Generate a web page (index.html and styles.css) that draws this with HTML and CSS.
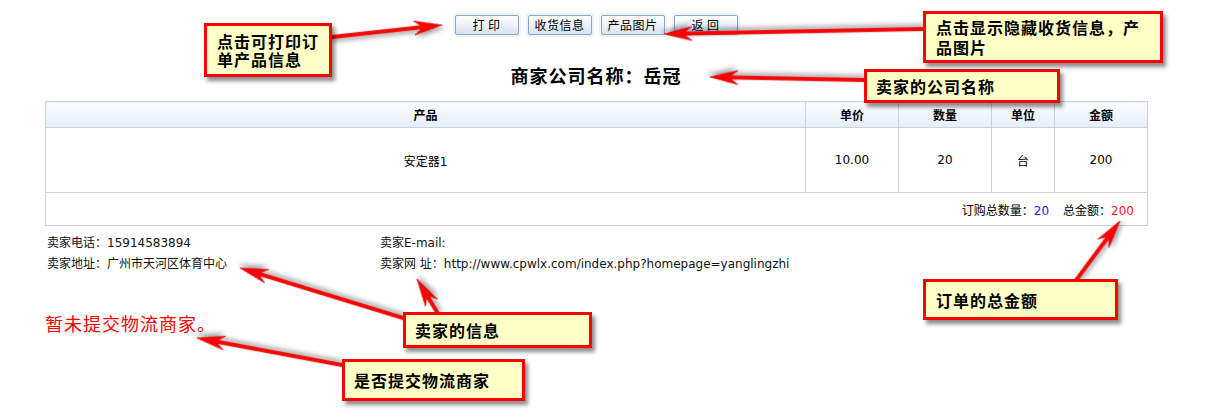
FILE: index.html
```html
<!DOCTYPE html>
<html lang="zh-CN">
<head>
<meta charset="utf-8">
<title>订单打印</title>
<link rel="stylesheet" href="styles.css">
</head>
<body>
<div class="page">
  <div class="toolbar">
    <button class="btn">打 印</button>
    <button class="btn">收货信息</button>
    <button class="btn">产品图片</button>
    <button class="btn">返 回</button>
  </div>
  <h1 class="title">商家公司名称：岳冠</h1>
  <table class="order">
    <colgroup>
      <col class="c-prod"><col class="c-price"><col class="c-qty"><col class="c-unit"><col class="c-amt">
    </colgroup>
    <thead>
      <tr><th>产品</th><th>单价</th><th>数量</th><th>单位</th><th>金额</th></tr>
    </thead>
    <tbody>
      <tr><td>安定器1</td><td>10.00</td><td>20</td><td>台</td><td>200</td></tr>
    </tbody>
    <tfoot>
      <tr><td colspan="5" class="total">订购总数量：<span class="num-blue">20</span><span class="sep"></span>总金额：<span class="num-red">200</span></td></tr>
    </tfoot>
  </table>
  <div class="seller">
    <div class="seller-item">卖家电话：15914583894</div>
    <div class="seller-item">卖家E-mail:</div>
    <div class="seller-item">卖家地址：广州市天河区体育中心</div>
    <div class="seller-item">卖家网 址：http://www.cpwlx.com/index.php?homepage=yanglingzhi</div>
  </div>
  <p class="logistics">暂未提交物流商家。</p>
</div>

<div class="annotations">
  <svg class="arrows" width="1206" height="412" viewBox="0 0 1206 412" xmlns="http://www.w3.org/2000/svg">
    <g class="arrow-set">
      <path transform="translate(442 25) rotate(-6.23)" d="M0 0 L-28 -7 L-21 -1.7 L-113 -1.7 L-113 1.7 L-21 1.7 L-28 7 Z"/>
      <path transform="translate(664 34) rotate(178.89)" d="M0 0 L-28 -7 L-21 -1.7 L-262 -1.7 L-262 1.7 L-21 1.7 L-28 7 Z"/>
      <path transform="translate(710 77) rotate(-178.88)" d="M0 0 L-28 -7 L-21 -1.7 L-157 -1.7 L-157 1.7 L-21 1.7 L-28 7 Z"/>
      <path transform="translate(1120 221) rotate(-53.44)" d="M0 0 L-28 -7 L-21 -1.7 L-76 -1.7 L-76 1.7 L-21 1.7 L-28 7 Z"/>
      <path transform="translate(240 268) rotate(-162.95)" d="M0 0 L-28 -7 L-21 -1.7 L-174 -1.7 L-174 1.7 L-21 1.7 L-28 7 Z"/>
      <path transform="translate(417 279) rotate(-121.2)" d="M0 0 L-28 -7 L-21 -1.7 L-42 -1.7 L-42 1.7 L-21 1.7 L-28 7 Z"/>
      <path transform="translate(197 338) rotate(-169.45)" d="M0 0 L-28 -7 L-21 -1.7 L-151 -1.7 L-151 1.7 L-21 1.7 L-28 7 Z"/>
    </g>
  </svg>
  <div class="note note-print">点击可打印订<br>单产品信息</div>
  <div class="note note-toggle">点击显示隐藏收货信息，产<br>品图片</div>
  <div class="note note-company">卖家的公司名称</div>
  <div class="note note-total">订单的总金额</div>
  <div class="note note-seller">卖家的信息</div>
  <div class="note note-logi">是否提交物流商家</div>
</div>
</body>
</html>
```
FILE: styles.css
```css
html, body {
  margin: 0;
  padding: 0;
  background: #ffffff;
}

body {
  position: relative;
  width: 1206px;
  height: 412px;
  overflow: hidden;
  font-family: "DejaVu Sans", "Noto Sans CJK SC", sans-serif;
  font-size: 12px;
  color: #000;
}

.page {
  width: 1102px;
  margin-left: 45px;
  padding-top: 15px;
}

.toolbar {
  display: flex;
  justify-content: center;
  gap: 9px;
}

.btn {
  width: 64px;
  height: 20px;
  padding: 0;
  border: 1px solid #8ea6c6;
  border-radius: 2px;
  background: linear-gradient(#ffffff 0%, #eef3f9 45%, #d6e2f0 100%);
  box-shadow: 0 0 0 2px #eef3fa;
  font-family: "Noto Sans CJK SC", "DejaVu Sans", sans-serif;
  font-size: 12px;
  line-height: 18px;
  letter-spacing: 0.5px;
  color: #000;
}

.title {
  margin: 28px 0 14px;
  font-family: "Noto Sans CJK SC", sans-serif;
  font-size: 18px;
  line-height: 24px;
  font-weight: bold;
  letter-spacing: 1px;
  text-align: center;
  color: #000;
}

.order {
  width: 1102px;
  table-layout: fixed;
  border-collapse: collapse;
  border: 1px solid #cad2df;
}

.c-prod { width: 760px; }
.c-price { width: 93px; }
.c-qty { width: 93px; }
.c-unit { width: 63px; }
.c-amt { width: 93px; }

.order th,
.order td {
  border: 1px solid #cad2df;
  padding: 0;
  text-align: center;
  font-size: 12px;
}

.order th {
  height: 25px;
  font-family: "Noto Sans CJK SC", sans-serif;
  font-weight: bold;
  background: linear-gradient(#fbfcfe 0%, #f1f5fb 50%, #e6eefa 100%);
}

.order tbody td {
  height: 64px;
}

.order .total {
  height: 32px;
  text-align: right;
  padding-right: 13px;
}

.num-blue { color: #1a1aff; }
.num-red { color: #ff1a1a; }

.sep {
  display: inline-block;
  width: 14px;
}

.seller {
  display: grid;
  grid-template-columns: 333px 1fr;
  grid-auto-rows: 21px;
  margin-top: 7px;
  padding-left: 2px;
}

.seller-item {
  line-height: 21px;
  white-space: nowrap;
  color: #111;
}

.logistics {
  margin: 36px 0 0;
  font-family: "Noto Sans CJK SC", sans-serif;
  font-size: 18px;
  line-height: 24px;
  letter-spacing: 1px;
  color: #ff0000;
}

.annotations {
  position: absolute;
  left: 0;
  top: 0;
  width: 1206px;
  height: 412px;
  pointer-events: none;
}

.arrows {
  position: absolute;
  left: 0;
  top: 0;
}

.arrow-set path {
  fill: #ff0000;
  stroke: #d80000;
  stroke-width: 0.6;
  filter: drop-shadow(2px 3px 2px rgba(0, 0, 0, 0.35));
}

.note {
  position: absolute;
  box-sizing: border-box;
  display: flex;
  flex-direction: column;
  justify-content: center;
  padding-left: 10px;
  border: 3px solid #ff0000;
  background: #ffffc6;
  box-shadow: 3px 4px 4px rgba(0, 0, 0, 0.45);
  font-family: "Noto Sans CJK SC", sans-serif;
  font-size: 16px;
  font-weight: bold;
  letter-spacing: 1px;
  line-height: 18px;
  color: #000;
  white-space: nowrap;
}

.note-print { left: 204px; top: 23px; width: 128px; height: 54px; line-height: 18px; }
.note-toggle { left: 923px; top: 11px; width: 240px; height: 52px; line-height: 20px; }
.note-company { left: 864px; top: 69px; width: 196px; height: 34px; padding-left: 9px; }
.note-total { left: 923px; top: 279px; width: 195px; height: 41px; }
.note-seller { left: 403px; top: 312px; width: 189px; height: 36px; padding-left: 9px; }
.note-logi { left: 342px; top: 359px; width: 183px; height: 42px; padding-left: 9px; }
```
